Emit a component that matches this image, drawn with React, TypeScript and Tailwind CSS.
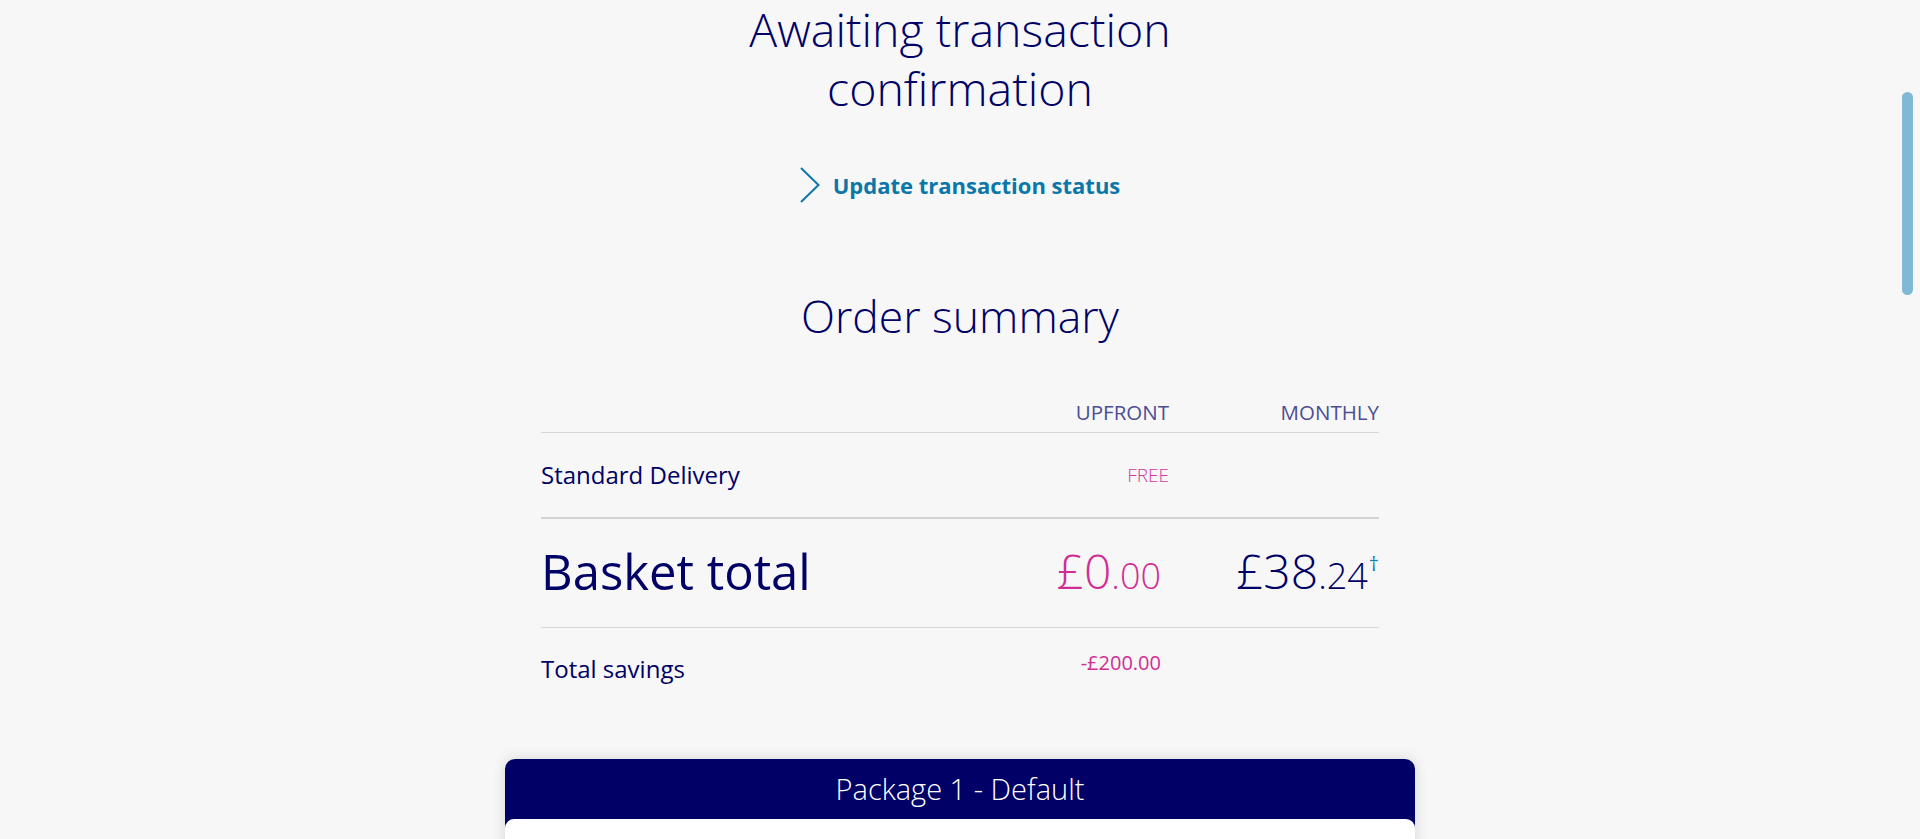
import React from "react";

function Chevron() {
  return (
    <svg width="20" height="36" viewBox="0 0 20 36" fill="none" className="shrink-0">
      <path d="M1 1 L18.5 18 L1 35" stroke="#0b77a8" strokeWidth="2" strokeLinejoin="miter" />
    </svg>
  );
}

export default function App() {
  return (
    <div className="h-screen w-full overflow-hidden bg-[#f7f7f7] font-['Open_Sans',sans-serif] text-[#000066]">
      <div className="flex flex-col items-center">
        <h1 className="w-[560px] text-center text-[46.5px] font-light leading-[59px] text-[#000066]">
          Awaiting transaction confirmation
        </h1>

        <a className="mt-[49px] flex items-center gap-[13px] text-[#0b77a8]">
          <Chevron />
          <span className="text-[22px] font-bold leading-[28px]">Update transaction status</span>
        </a>

        <h2 className="mt-[85px] text-[44.5px] font-light leading-[56px]">Order summary</h2>

        <div className="mt-[54px] w-[838px]">
          <div className="grid grid-cols-[1fr_210px_210px] border-b border-[#d6d6d6] pb-[6px] text-[20.5px] leading-[28px] text-[#4d4d94]">
            <div />
            <div className="text-right">UPFRONT</div>
            <div className="text-right">MONTHLY</div>
          </div>

          <div className="grid h-[86px] grid-cols-[1fr_210px_210px] items-center border-b-2 border-[#d2d2d2]">
            <div className="text-[24px] leading-[30px]">Standard Delivery</div>
            <div className="text-right text-[19px] font-light leading-[28px] text-[#d2399f]">FREE</div>
            <div />
          </div>

          <div className="grid h-[109px] grid-cols-[1fr_210px_210px] items-center border-b border-[#d6d6d6] pb-[4px]">
            <div className="text-[49px] leading-[56px]">Basket total</div>
            <div className="pr-[8px] text-right text-[48px] font-light leading-[56px] text-[#cf2e96]">
              £0<span className="text-[36px] leading-none">.00</span>
            </div>
            <div className="text-right text-[48px] font-light leading-[56px] text-[#000066]">
              £38<span className="text-[36px] leading-none">.24</span>
              <span className="relative top-[-18px] ml-[1px] text-[20px] font-normal leading-none text-[#0a80b0]">†</span>
            </div>
          </div>

          <div className="grid grid-cols-[1fr_210px_210px] items-start">
            <div className="pt-[26px] text-[24px] leading-[30px]">Total savings</div>
            <div className="pr-[8px] pt-[21px] text-right text-[20px] font-medium leading-[28px] text-[#cf2e96]">
              -£200.00
            </div>
            <div />
          </div>
        </div>

        <div className="mt-[75px] w-[910px] overflow-hidden rounded-[10px] bg-[#000066] shadow-[0_0_14px_rgba(0,0,0,0.14)]">
          <div className="flex h-[60px] items-center justify-center text-[29px] font-light text-white">
            Package 1 - Default
          </div>
          <div className="h-[240px] rounded-t-[9px] bg-white" />
        </div>
      </div>

      <div className="fixed right-[7px] top-[92px] h-[203px] w-[11px] rounded-full bg-[#7fb9d4]" />
    </div>
  );
}
